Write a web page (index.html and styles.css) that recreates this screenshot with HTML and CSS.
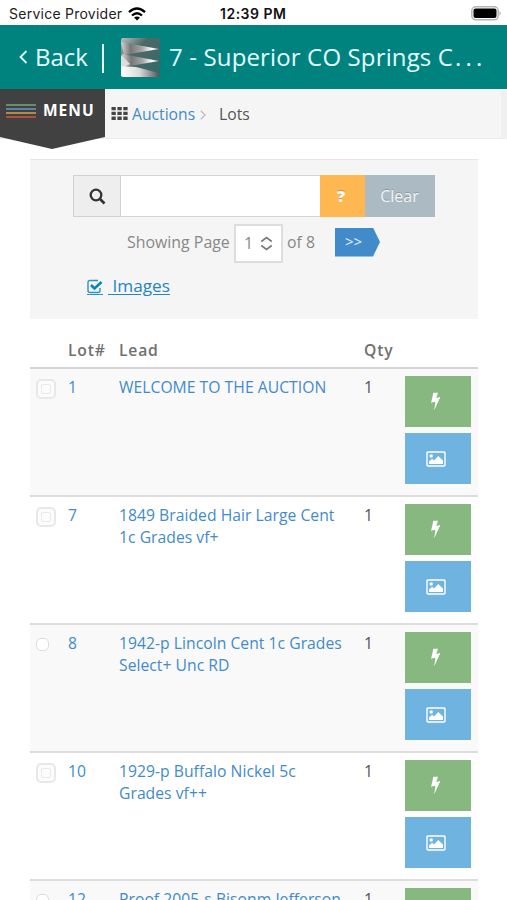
FILE: index.html
```html
<!DOCTYPE html>
<html lang="en">
<head>
<meta charset="utf-8">
<meta name="viewport" content="width=device-width">
<title>Lots</title>
<link rel="stylesheet" href="styles.css">
</head>
<body>
<svg class="defs" aria-hidden="true">
  <symbol id="bolt" viewBox="0 0 10 18"><path d="M3 .8H7.300L5.800 5.600 9.600 4.700 3.800 17.200 4.800 9.200 .8 10.100Z"/></symbol>
  <symbol id="image" viewBox="0 0 20 16"><rect x="1" y="1" width="18" height="14" rx="1" fill="none" stroke="currentColor" stroke-width="1.4"/><circle cx="5.2" cy="5" r="1.7"/><path d="M3 13V10.6L6 7.8 8 9.5 12.2 5 17 9.4V13Z"/></symbol>
</svg>
<div class="status">
  <span class="carrier">Service Provider</span>
  <svg class="wifi" viewBox="0 0 18 14"><g fill="none" stroke="#000" stroke-width="2.3"><path d="M1 5.2Q9-2.2 17 5.2"/><path d="M4 8.5Q9 4 14 8.5"/></g><path d="M9 13.6 6 10.6Q9 8.2 12 10.6Z"/></svg>
  <span class="time">12:39 PM</span>
  <svg class="battery" viewBox="0 0 31 15"><rect x=".8" y=".8" width="26.4" height="13" rx="4" fill="#fff" stroke="#b5b5b5" stroke-width="1.5"/><rect x="2.5" y="2.5" width="23" height="9.6" rx="2"/><path d="M28.5 5Q31 7.3 28.5 9.8Z" fill="#aaa"/></svg>
</div>
<header class="titlebar">
  <svg class="back-arrow" viewBox="0 0 9 14"><path d="M7.5 1 1.5 7l6 6" fill="none" stroke="#e4ffff" stroke-width="1.8"/></svg>
  <span class="back">Back</span>
  <span class="divider"></span>
  <svg class="logo" viewBox="0 0 39 39">
    <defs>
      <linearGradient id="metal"><stop offset="0" stop-color="#d5d5d5"/><stop offset=".25" stop-color="#777"/><stop offset=".55" stop-color="#a5a5a5"/><stop offset=".8" stop-color="#fff"/><stop offset="1" stop-color="#ccc"/></linearGradient>
      <linearGradient id="shade" x2="1" y2="1"><stop offset="0" stop-color="#b9c0c0"/><stop offset=".35" stop-color="#4e6868"/><stop offset="1" stop-color="#2e6b6b"/></linearGradient>
      <linearGradient id="foot" x2="1"><stop offset="0" stop-color="#fff"/><stop offset=".5" stop-color="#d8d8d8"/><stop offset="1" stop-color="#555"/></linearGradient>
    </defs>
    <rect width="39" height="39" rx="2" fill="url(#shade)"/>
    <path d="M0 4 38 11 3 17Z" fill="url(#metal)"/>
    <path d="M1 16 38 23 3 29Z" fill="url(#metal)"/>
    <path d="M0 17V28L4 28.500 9 26Z" fill="#ddd"/>
    <path d="M0 28 15 29 38 35V39H2Q0 39 0 37Z" fill="url(#foot)"/>
  </svg>
  <h1 class="title">7 - Superior CO Springs C<span class="dots">...</span></h1>
</header>
<nav class="crumbs">
  <div class="menu">
    <svg class="menu-lines" viewBox="0 0 30 14" stroke-width="1.300"><path d="M0 1h30" stroke="#76a875"/><path d="M0 5h30" stroke="#5d9ccc"/><path d="M0 9h30" stroke="#dda04f"/><path d="M0 13h30" stroke="#cf5a40"/></svg>
    <span>MENU</span>
  </div>
  <svg class="grid-icon" viewBox="0 0 17 13"><path d="M.5 0h4.300v3.300h-4.300zM6.400 0h4.300v3.300h-4.300zM12.300 0h4.300v3.300h-4.300zM.5 4.800h4.300v3.300h-4.300zM6.400 4.800h4.300v3.300h-4.300zM12.300 4.800h4.300v3.300h-4.300zM.5 9.600h4.300v3.300h-4.300zM6.400 9.600h4.300v3.300h-4.300zM12.300 9.600h4.300v3.300h-4.300z"/></svg>
  <a class="crumb-link">Auctions</a>
  <svg class="crumb-sep" viewBox="0 0 6 10"><path d="M.8.8 5 5 .8 9.200" fill="none" stroke="#bbb" stroke-width="1.300"/></svg>
  <span class="crumb-now">Lots</span>
</nav>
<main>
  <section class="search-panel">
    <div class="search-row">
      <span class="search-icon"><svg viewBox="0 0 17 17"><circle cx="7" cy="7" r="5.300" fill="none" stroke="#333" stroke-width="2.300"/><path d="m11 11 4.500 4.500" stroke="#333" stroke-width="2.600"/></svg></span>
      <input class="search-input" type="text" aria-label="Search">
      <span class="help">?</span>
      <span class="clear">Clear</span>
    </div>
    <div class="page-row">
      <span class="showing">Showing Page</span>
      <span class="page-select">1<svg viewBox="0 0 13 15"><path d="M1.300 5.500 6.500 1.500l5.200 4M1.300 9.500l5.200 4 5.200-4" fill="none" stroke="#777" stroke-width="1.600"/></svg></span>
      <span class="total">of 8</span>
      <span class="next">&gt;&gt;</span>
    </div>
    <div class="images-row">
      <svg viewBox="0 0 16 16"><path d="M11 1.500H3Q1 1.500 1 3.500v8q0 2 2 2h8q2 0 2-2V9" fill="none" stroke="#2e93c8" stroke-width="1.400"/><path d="m4 6 3.500 3.500L14.500 3" fill="none" stroke="#0784c3" stroke-width="2.600"/><path d="M0 15.500h16" stroke="#2e93c8"/></svg>
      <a>&nbsp;Images</a>
    </div>
  </section>
  <section class="lots">
    <div class="row head"><span></span><span>Lot#</span><span>Lead</span><span>Qty</span></div>
    <div class="row odd"><span class="check"></span><a>1</a><a>WELCOME TO THE AUCTION</a><span>1</span><div class="actions"><span class="btn bid"><svg><use href="#bolt"/></svg></span><span class="btn pic"><svg><use href="#image"/></svg></span></div></div>
    <div class="row"><span class="check"></span><a>7</a><a>1849 Braided Hair Large Cent<br>1c Grades vf+</a><span>1</span><div class="actions"><span class="btn bid"><svg><use href="#bolt"/></svg></span><span class="btn pic"><svg><use href="#image"/></svg></span></div></div>
    <div class="row odd"><span class="check small"></span><a>8</a><a>1942-p Lincoln Cent 1c Grades<br>Select+ Unc RD</a><span>1</span><div class="actions"><span class="btn bid"><svg><use href="#bolt"/></svg></span><span class="btn pic"><svg><use href="#image"/></svg></span></div></div>
    <div class="row"><span class="check"></span><a>10</a><a>1929-p Buffalo Nickel 5c<br>Grades vf++</a><span>1</span><div class="actions"><span class="btn bid"><svg><use href="#bolt"/></svg></span><span class="btn pic"><svg><use href="#image"/></svg></span></div></div>
    <div class="row odd"><span class="check small"></span><a>12</a><a>Proof 2005-s Bisonm Jefferson</a><span>1</span><div class="actions"><span class="btn bid"><svg><use href="#bolt"/></svg></span><span class="btn pic"><svg><use href="#image"/></svg></span></div></div>
  </section>
</main>
</body>
</html>
```
FILE: styles.css
```css
* { box-sizing: border-box; }
body { margin: 0; height: 900px; overflow: hidden; background: #fff; color: #555; font: 16px/22px "Open Sans", sans-serif; }
svg { display: block; flex: none; }
.defs { display: none; }

.status { display: grid; grid-template-columns: 119px 92px 1fr 31px; align-items: center; height: 25px; padding: 2px 5px 0 9px; color: #222; font: 14px/20px Inter, sans-serif; }
.carrier { white-space: nowrap; letter-spacing: .25px; }
.wifi { width: 18px; height: 14px; }
.time { color: #111; font-weight: 600; letter-spacing: .5px; }
.battery { width: 31px; height: 15px; }

.titlebar { display: flex; align-items: center; height: 64px; padding-left: 19px; background: #00827f; color: #e4ffff; font-size: 24px; }
.back-arrow { width: 9px; height: 14px; }
.back { margin-left: 7px; width: 53px; }
.divider { width: 2px; height: 29px; margin: 2px 17px 0 14px; background: #e4ffff; }
.logo { width: 39px; height: 39px; }
.title { margin: 0 0 0 9px; font-size: 24px; font-weight: 400; letter-spacing: .14px; white-space: nowrap; }
.dots { letter-spacing: 4.200px; margin-left: 2px; }

.crumbs { display: flex; align-items: flex-start; height: 50px; background: #f5f5f5; border-bottom: 1px solid #ececec; border-right: 6px solid #f0f0f0; }
.menu { display: flex; gap: 7px; flex: none; width: 105px; height: 60px; padding: 10px 0 0 6px; background: #414141; color: #fff; clip-path: polygon(0 0, 100% 0, 100% 48px, 52px 100%, 0 48px); font-size: 15.500px; font-weight: 700; letter-spacing: 1px; }
.menu-lines { width: 30px; height: 14px; margin-top: 5px; }
.grid-icon { width: 17px; height: 13px; margin: 18px 4px 0 6px; fill: #444; }
.crumb-link, .crumb-now { margin-top: 14px; font-size: 15.700px; }
.crumb-link { width: 64px; color: #428bca; }
.crumb-sep { width: 6px; height: 10px; margin: 21px 0 0 4px; }
.crumb-now { margin-left: 13px; }

main { padding: 20px 29px 0 30px; }
.search-panel { height: 160px; padding-top: 15px; background: #f5f5f5; border-top: 1px solid #e5e5e5; }
.search-row { display: flex; width: 362px; height: 42px; margin-left: 43px; }
.search-icon { display: grid; place-items: center; width: 48px; background: #eee; border: 1px solid #d2d2d2; }
.search-icon svg { width: 17px; height: 17px; }
.search-input { width: 199px; padding: 0; background: #fff; border: 1px solid #d5d5d5; border-width: 1px 0; }
.help, .clear { display: grid; place-items: center; color: #fff; text-shadow: 0 -1px 0 rgba(0, 0, 0, .2); }
.help { width: 45px; padding-right: 3px; background: #ffb752; font-weight: 800; }
.clear { width: 70px; padding-right: 1px; background: #abbac3; color: #f2f5f6; }
.page-row { display: flex; align-items: center; height: 39px; margin: 7px 0 0 97px; color: #888; }
.showing { width: 103px; font-size: 15.900px; margin-top: -4px; white-space: nowrap; }
.page-select { display: flex; align-items: center; justify-content: space-between; width: 49px; height: 39px; margin-left: 4px; padding: 0 8px 2px 8px; background: #fff; border: 2px solid #ddd; }
.page-select svg { width: 13px; height: 15px; margin-top: 1px; }
.total { width: 31px; margin: -4px 0 0 4px; font-size: 15.800px; white-space: nowrap; }
.next { width: 45px; height: 29px; margin: -3px 0 0 17px; padding-left: 10px; background: #428bca; color: #e5f0f9; clip-path: polygon(0 0, 38px 0, 100% 50%, 38px 100%, 0 100%); font-size: 15px; line-height: 27px; }
.images-row { display: flex; margin: 12px 0 0 57px; color: #2585bd; }
.images-row svg { width: 16px; height: 16px; margin: 4px 5px 0 0; }
.images-row a { font-size: 17.200px; text-decoration: underline; text-underline-offset: 2px; }

.row { display: grid; grid-template-columns: 38px 51px 245px 41px 66px; height: 128px; padding-top: 7px; border-top: 2px solid #ddd; white-space: nowrap; }
.row > :not(.check):not(.actions) { font-size: 15.700px; letter-spacing: .03px; }
.row.odd { background: #f9f9f9; }
.row a { color: #428bca; }
.row.head { height: 48px; padding-top: 20px; border: 0; }
.row.head > span:not(.check):not(.actions) { color: #707070; font-weight: 600; letter-spacing: .8px; }
.row.head + .row { border-top-color: #d5d5d5; }
.check { display: grid; place-items: center; width: 20px; height: 20px; margin: 3px 0 0 6px; border: 2px solid #e8e8e8; border-radius: 5px; background: #fcfcfc; }
.check::after { content: ""; width: 8px; height: 8px; border: 1px solid #e8e8e8; border-radius: 2px; }
.check.small { width: 13px; height: 13px; margin-top: 6px; border: 1px solid #ddd; background: #fff; }
.check.small::after { display: none; }
.actions { display: grid; grid-template-rows: 51px 51px; gap: 6px; }
.btn { display: grid; place-items: center; padding-right: 5px; color: #fff; fill: #fff; }
.bid { background: #87b87f; }
.pic { background: #6fb3e0; }
.bid svg { width: 11px; height: 19px; }
.pic svg { width: 20px; height: 16px; }
```
